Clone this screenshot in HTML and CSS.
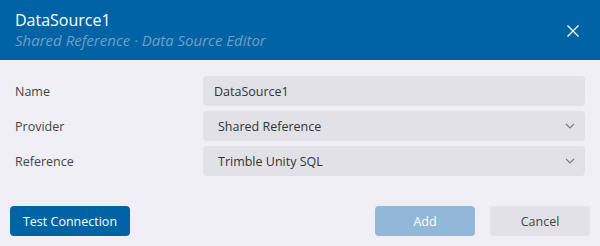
FILE: index.html
```html
<!DOCTYPE html>
<html lang="en">
<head>
    <meta charset="UTF-8">
    <meta name="viewport" content="width=device-width, initial-scale=1.0">
    <title>Data Source Editor</title>
    <link rel="stylesheet" href="styles.css">
</head>
<body>
    <div class="dialog">
        <header class="dialog-header">
            <div class="titles">
                <h1>DataSource1</h1>
                <p>Shared Reference · Data Source Editor</p>
            </div>
            <button class="close" aria-label="Close">
                <svg width="12" height="12" viewBox="0 0 12 12">
                    <path d="M0.5 0.5 L11.5 11.5 M11.5 0.5 L0.5 11.5" stroke="#fff" stroke-width="1.2" fill="none"/>
                </svg>
            </button>
        </header>
        <main class="form">
            <div class="row">
                <label>Name</label>
                <div class="field">DataSource1</div>
            </div>
            <div class="row">
                <label>Provider</label>
                <div class="field select">
                    <span>Shared Reference</span>
                    <svg class="chevron" width="10" height="6" viewBox="0 0 10 6">
                        <path d="M1 1 L5 5 L9 1" stroke="#7a7a80" stroke-width="1.2" fill="none"/>
                    </svg>
                </div>
            </div>
            <div class="row">
                <label>Reference</label>
                <div class="field select">
                    <span>Trimble Unity SQL</span>
                    <svg class="chevron" width="10" height="6" viewBox="0 0 10 6">
                        <path d="M1 1 L5 5 L9 1" stroke="#7a7a80" stroke-width="1.2" fill="none"/>
                    </svg>
                </div>
            </div>
        </main>
        <footer class="dialog-footer">
            <button class="btn primary">Test Connection</button>
            <div class="actions">
                <button class="btn disabled">Add</button>
                <button class="btn secondary">Cancel</button>
            </div>
        </footer>
    </div>
</body>
</html>
```

FILE: styles.css
```css
body {
    margin: 0;
    padding: 0;
    font-family: "Open Sans", "Noto Sans", sans-serif;
    background: #f0eff5;
    color: #333;
}

.dialog {
    width: 600px;
    height: 246px;
    display: flex;
    flex-direction: column;
    background: #f0eff5;
}

.dialog-header {
    height: 60px;
    box-sizing: border-box;
    background: #0063a3;
    display: flex;
    align-items: center;
    justify-content: space-between;
    padding: 0 21px 0 15px;
}

.titles h1 {
    margin: 0;
    font-size: 16px;
    font-weight: 400;
    color: #fff;
    line-height: 20px;
}

.titles p {
    margin: 0;
    font-size: 15px;
    font-style: italic;
    color: #6f9fcb;
    line-height: 20px;
}

.close {
    background: none;
    border: 0;
    padding: 0;
    margin-top: 1px;
    display: flex;
    cursor: pointer;
}

.form {
    padding: 16px 15px 0 15px;
    display: flex;
    flex-direction: column;
    gap: 5px;
}

.row {
    display: flex;
    align-items: center;
    height: 30px;
}

.row label {
    width: 188px;
    font-size: 12.5px;
    color: #444;
}

.field {
    flex: 1;
    height: 30px;
    box-sizing: border-box;
    background: #e2e1e8;
    border-radius: 4px;
    padding: 0 11px;
    display: flex;
    align-items: center;
    justify-content: space-between;
    font-size: 12.5px;
    color: #333;
}

.select {
    padding: 0 10px 0 15px;
}

.dialog-footer {
    margin-top: auto;
    display: flex;
    justify-content: space-between;
    padding: 0 10px 10px;
}

.actions {
    display: flex;
    gap: 15px;
}

.btn {
    height: 30px;
    border: 0;
    border-radius: 4px;
    font-family: inherit;
    font-size: 12.5px;
    padding: 0;
    cursor: pointer;
}

.primary {
    width: 120px;
    background: #0063a3;
    color: #fff;
}

.disabled {
    width: 100px;
    background: #93b7d6;
    color: #fff;
}

.secondary {
    width: 100px;
    background: #e2e1e8;
    color: #444;
}
```
